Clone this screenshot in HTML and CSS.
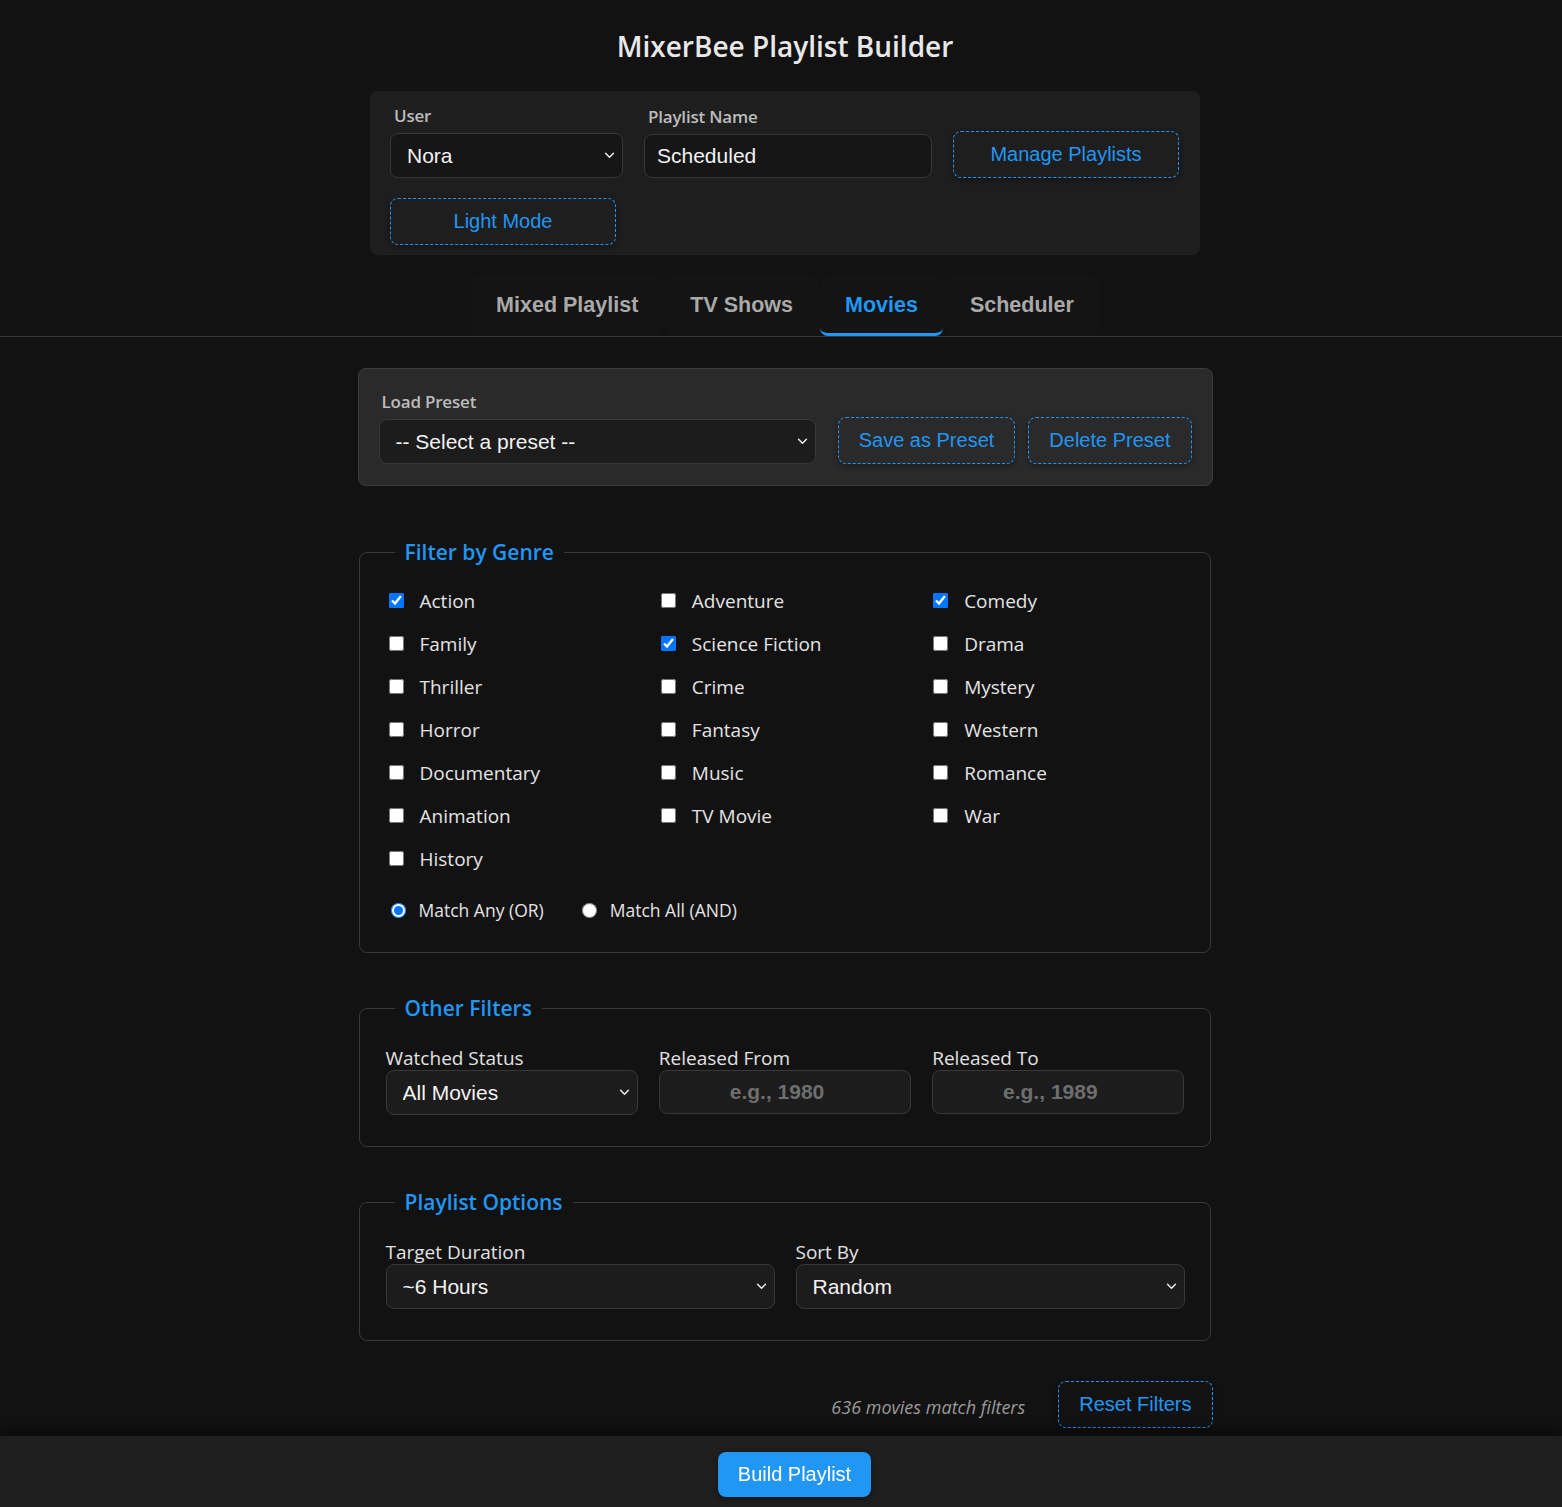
FILE: index.html
```html
<!DOCTYPE html>
<html lang="en">
<head>
<meta charset="utf-8">
<title>MixerBee Playlist Builder</title>
<link rel="stylesheet" href="styles.css">
</head>
<body>
  <h1 class="title">MixerBee Playlist Builder</h1>

  <section class="header-card">
    <div class="field user-field">
      <label class="small-label">User</label>
      <select class="control"><option>Nora</option></select>
    </div>
    <div class="field name-field">
      <label class="small-label">Playlist Name</label>
      <input class="control" type="text" value="Scheduled">
    </div>
    <button class="btn btn-wide">Manage Playlists</button>
    <button class="btn btn-wide">Light Mode</button>
  </section>

  <nav class="tabs">
    <button class="tab">Mixed Playlist</button>
    <button class="tab">TV Shows</button>
    <button class="tab active">Movies</button>
    <button class="tab">Scheduler</button>
  </nav>

  <main class="main">
    <section class="preset-card">
      <div class="field preset-field">
        <label class="small-label">Load Preset</label>
        <select class="control"><option>-- Select a preset --</option></select>
      </div>
      <button class="btn">Save as Preset</button>
      <button class="btn">Delete Preset</button>
    </section>

    <fieldset class="group genre-group">
      <legend>Filter by Genre</legend>
      <div class="genre-grid">
        <label class="check"><input type="checkbox" checked><span>Action</span></label>
        <label class="check"><input type="checkbox"><span>Adventure</span></label>
        <label class="check"><input type="checkbox" checked><span>Comedy</span></label>
        <label class="check"><input type="checkbox"><span>Family</span></label>
        <label class="check"><input type="checkbox" checked><span>Science Fiction</span></label>
        <label class="check"><input type="checkbox"><span>Drama</span></label>
        <label class="check"><input type="checkbox"><span>Thriller</span></label>
        <label class="check"><input type="checkbox"><span>Crime</span></label>
        <label class="check"><input type="checkbox"><span>Mystery</span></label>
        <label class="check"><input type="checkbox"><span>Horror</span></label>
        <label class="check"><input type="checkbox"><span>Fantasy</span></label>
        <label class="check"><input type="checkbox"><span>Western</span></label>
        <label class="check"><input type="checkbox"><span>Documentary</span></label>
        <label class="check"><input type="checkbox"><span>Music</span></label>
        <label class="check"><input type="checkbox"><span>Romance</span></label>
        <label class="check"><input type="checkbox"><span>Animation</span></label>
        <label class="check"><input type="checkbox"><span>TV Movie</span></label>
        <label class="check"><input type="checkbox"><span>War</span></label>
        <label class="check"><input type="checkbox"><span>History</span></label>
      </div>
      <div class="match-row">
        <label class="radio"><input type="radio" name="match" checked><span>Match Any (OR)</span></label>
        <label class="radio"><input type="radio" name="match"><span>Match All (AND)</span></label>
      </div>
    </fieldset>

    <fieldset class="group">
      <legend>Other Filters</legend>
      <div class="row-3">
        <div class="field">
          <label class="big-label">Watched Status</label>
          <select class="control"><option>All Movies</option></select>
        </div>
        <div class="field">
          <label class="big-label">Released From</label>
          <input class="control center" type="text" placeholder="e.g., 1980">
        </div>
        <div class="field">
          <label class="big-label">Released To</label>
          <input class="control center" type="text" placeholder="e.g., 1989">
        </div>
      </div>
    </fieldset>

    <fieldset class="group">
      <legend>Playlist Options</legend>
      <div class="row-2">
        <div class="field">
          <label class="big-label">Target Duration</label>
          <select class="control"><option>~6 Hours</option></select>
        </div>
        <div class="field">
          <label class="big-label">Sort By</label>
          <select class="control"><option>Random</option></select>
        </div>
      </div>
    </fieldset>

    <div class="results-row">
      <span class="count">636 movies match filters</span>
      <button class="btn">Reset Filters</button>
    </div>
  </main>

  <footer class="action-bar">
    <button class="build-btn">Build Playlist</button>
  </footer>
</body>
</html>
```

FILE: styles.css
```css
* { box-sizing: border-box; }

html, body {
  background: #121212;
}

body {
  margin: 0;
  padding: 0 0 90px 8px;
  color: #e0e0e0;
  font-family: "Open Sans", "Noto Sans", sans-serif;
}

.title {
  margin: 0;
  padding-top: 27px;
  text-align: center;
  font-size: 28px;
  font-weight: 600;
  line-height: 39px;
  color: #e8e8e8;
}

/* ---------- header card ---------- */
.header-card {
  width: 830px;
  margin: 25px auto 0;
  background: #1e1e1e;
  border-radius: 8px;
  padding: 13px 20px 10px;
  display: flex;
  flex-wrap: wrap;
  align-items: flex-end;
  column-gap: 21px;
  row-gap: 20px;
}

.field {
  display: flex;
  flex-direction: column;
}

.user-field { width: 233px; }
.name-field { width: 288px; }

.small-label {
  font-size: 17px;
  font-weight: 600;
  color: #bcbcbc;
  line-height: 23px;
  margin: 0 0 6px 4px;
  letter-spacing: -0.2px;
}

.control {
  height: 45px;
  width: 100%;
  background: #181818;
  border: 1px solid #383838;
  border-radius: 8px;
  color: #f2f2f2;
  font-family: "Liberation Sans", Arial, sans-serif;
  font-size: 21px;
  padding: 0 12px;
  outline: none;
}

select.control {
  appearance: none;
  -webkit-appearance: none;
  padding-left: 16px;
  background-image: url("data:image/svg+xml;utf8,<svg xmlns='http://www.w3.org/2000/svg' width='12' height='8' viewBox='0 0 12 8'><path d='M1.5 1.5 L6 6 L10.5 1.5' fill='none' stroke='%23e6e6e6' stroke-width='1.8' stroke-linecap='round' stroke-linejoin='round'/></svg>");
  background-repeat: no-repeat;
  background-position: right 7px center;
  background-size: 11px 7px;
}

.header-card .control { background-color: #161616; }
.name-field .control { height: 44px; }

.control::placeholder {
  color: #6e6e6e;
  font-weight: 700;
}

.control.center {
  text-align: center;
  padding: 0 28px 0 12px;
}

.btn {
  height: 47px;
  padding: 0 20px;
  background: transparent;
  border: 1px dashed #2196f3;
  border-radius: 8px;
  color: #2196f3;
  font-family: "Liberation Sans", Arial, sans-serif;
  font-size: 20px;
  box-shadow: 0 2px 6px rgba(0, 0, 0, 0.35);
  cursor: pointer;
  white-space: nowrap;
}

.btn-wide { width: 226px; }

/* ---------- tabs ---------- */
.tabs {
  margin: 20px 0 0 -8px;
  padding-left: 8px;
  display: flex;
  justify-content: center;
  gap: 2px;
  border-bottom: 1px solid #363636;
}

.tab {
  height: 61px;
  padding: 0 25px;
  background: #141414;
  border: none;
  border-radius: 8px;
  color: #a9a9a9;
  font-family: "Liberation Sans", Arial, sans-serif;
  font-size: 21.5px;
  font-weight: 700;
  cursor: pointer;
}

.tab.active {
  color: #2196f3;
  border-bottom: 3px solid #2196f3;
  padding-top: 3px;
}

/* ---------- main ---------- */
.main {
  width: 855px;
  margin: 31px auto 0;
}

.preset-card {
  background: #2a2a2a;
  border: 1px solid #3c3c3c;
  border-radius: 8px;
  padding: 21px 20px 21px 20px;
  display: flex;
  align-items: flex-end;
  gap: 13px;
}

.preset-field {
  flex: 1;
  margin-right: 9px;
}

.preset-field .small-label { margin-left: 3px; }
.preset-card .control { background-color: #1c1c1c; }

/* ---------- fieldsets ---------- */
.group {
  margin: 41px 2px 0 1px;
  border: 1px solid #383838;
  border-radius: 8px;
  padding: 24px 25px 31px 26px;
  min-width: 0;
}

.main .genre-group {
  margin-top: 52px;
  padding-bottom: 31px;
}

.group legend {
  margin-left: 9px;
  padding: 0 10px;
  color: #2196f3;
  font-size: 21px;
  font-weight: 600;
  line-height: 28px;
}

.genre-grid {
  display: grid;
  grid-template-columns: repeat(3, 1fr);
  column-gap: 18px;
  row-gap: 17px;
  margin-top: -2px;
}

.check,
.radio {
  display: flex;
  align-items: center;
  font-size: 19px;
  line-height: 26px;
  color: #e4e4e4;
}

.check input {
  width: 15px;
  height: 15px;
  margin: 0 16px 2px 3px;
}

.match-row {
  display: flex;
  gap: 33px;
  margin-top: 25px;
  margin-bottom: -2px;
}

.radio { font-size: 17.5px; }

.radio input {
  width: 15px;
  height: 15px;
  margin: 0 13px 0 5px;
}

.big-label {
  font-size: 19px;
  line-height: 24px;
  color: #e2e2e2;
  margin-bottom: 0;
}

.row-3 {
  display: grid;
  grid-template-columns: repeat(3, 1fr);
  gap: 21px;
}

.row-2 {
  display: grid;
  grid-template-columns: repeat(2, 1fr);
  gap: 21px;
}

.group .control { background-color: #1c1c1c; }
.row-3 .field:nth-child(n+2) .control { height: 44px; }

/* ---------- results ---------- */
.results-row {
  margin-top: 40px;
  display: flex;
  justify-content: flex-end;
  align-items: center;
  gap: 33px;
}

.count {
  font-style: italic;
  font-size: 18px;
  color: #9a9a9a;
  margin-top: 4px;
}

/* ---------- bottom bar ---------- */
.action-bar {
  position: fixed;
  left: 0;
  right: 0;
  bottom: 0;
  height: 71px;
  background: #1f1f1f;
  box-shadow: 0 -6px 12px rgba(0, 0, 0, 0.45);
  display: flex;
  justify-content: center;
  align-items: center;
  padding: 6px 0 0 27px;
}

.build-btn {
  height: 45px;
  padding: 0 20px;
  background: #2196f3;
  color: #ffffff;
  border: none;
  border-radius: 8px;
  font-family: "Liberation Sans", Arial, sans-serif;
  font-size: 20px;
  box-shadow: 0 2px 6px rgba(0, 0, 0, 0.4);
  cursor: pointer;
}
```
